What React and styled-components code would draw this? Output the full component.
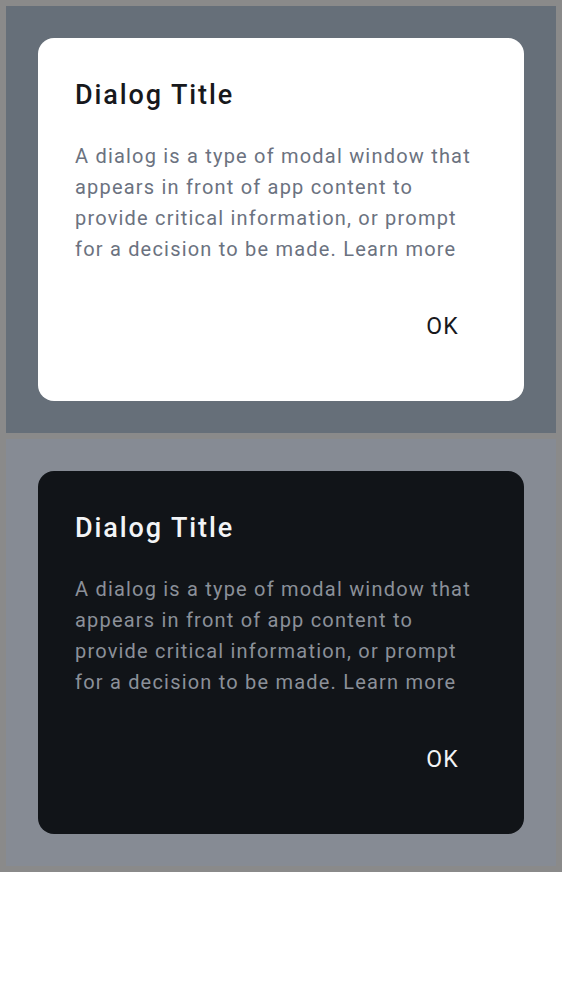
import styled, { createGlobalStyle } from 'styled-components';

const GlobalStyle = createGlobalStyle`
  html, body {
    margin: 0;
    padding: 0;
    background: #ffffff;
    font-family: Roboto, "Noto Sans", sans-serif;
  }
`;

const Frame = styled.div`
  display: flex;
  flex-direction: column;
  gap: 6px;
  padding: 6px;
  background: #8a8a8a;
`;

const Scrim = styled.section`
  padding: 32px;
  background: ${props => (props.dark ? '#868b94' : '#666f79')};
`;

const Card = styled.div`
  display: flex;
  flex-direction: column;
  height: 363px;
  box-sizing: border-box;
  padding: 41px 37px 0;
  border-radius: 16px;
  background: ${props => (props.dark ? '#111418' : '#ffffff')};
`;

const Title = styled.h2`
  margin: 0 0 30px;
  font-size: 27px;
  line-height: 32px;
  font-weight: 500;
  letter-spacing: 1.9px;
  color: ${props => (props.dark ? '#f3f4f6' : '#17181c')};
`;

const Body = styled.p`
  margin: 0;
  font-size: 20px;
  line-height: 31px;
  letter-spacing: 1.2px;
  color: ${props => (props.dark ? '#8b9099' : '#6b7280')};
`;

const Actions = styled.div`
  display: flex;
  justify-content: flex-end;
  margin-top: 38px;
`;

const TextButton = styled.button`
  border: 0;
  background: transparent;
  padding: 8px 28px 8px 12px;
  font-family: inherit;
  font-size: 23px;
  line-height: 32px;
  font-weight: 400;
  letter-spacing: 1.2px;
  color: ${props => (props.dark ? '#f3f4f6' : '#17181c')};
  cursor: pointer;
`;

const Dialog = ({ dark }) => (
  <Scrim dark={dark}>
    <Card dark={dark}>
      <Title dark={dark}>Dialog Title</Title>
      <Body dark={dark}>
        A dialog is a type of modal window that appears in front of app content to
        provide critical information, or prompt for a decision to be made. Learn more
      </Body>
      <Actions>
        <TextButton dark={dark}>OK</TextButton>
      </Actions>
    </Card>
  </Scrim>
);

const App = () => (
  <>
    <GlobalStyle />
    <Frame>
      <Dialog />
      <Dialog dark />
    </Frame>
  </>
);

export default App;
